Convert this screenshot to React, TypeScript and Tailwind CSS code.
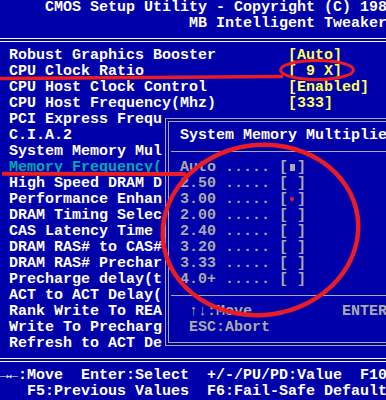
import React from 'react';

type Row = { label: string; value?: string; active?: boolean };

const rows: Row[] = [
  { label: 'Robust Graphics Booster', value: '[Auto]' },
  { label: 'CPU Clock Ratio', value: '[ 9 X]' },
  { label: 'CPU Host Clock Control', value: '[Enabled]' },
  { label: 'CPU Host Frequency(Mhz)', value: '[333]' },
  { label: 'PCI Express Frequ' },
  { label: 'C.I.A.2' },
  { label: 'System Memory Mul' },
  { label: 'Memory Frequency(', active: true },
  { label: 'High Speed DRAM D' },
  { label: 'Performance Enhan' },
  { label: 'DRAM Timing Selec' },
  { label: 'CAS Latency Time' },
  { label: 'DRAM RAS# to CAS#' },
  { label: 'DRAM RAS# Prechar' },
  { label: 'Precharge delay(t' },
  { label: 'ACT to ACT Delay(' },
  { label: 'Rank Write To REA' },
  { label: 'Write To Precharg' },
  { label: 'Refresh to ACT De' },
];

const options = [
  { label: 'Auto', picked: true },
  { label: '2.50' },
  { label: '3.00' },
  { label: '2.00' },
  { label: '2.40' },
  { label: '3.20' },
  { label: '3.33' },
  { label: '4.0+' },
];

function DoubleLine() {
  return (
    <div className="flex h-4 items-center">
      <div className="h-[4px] w-full border-y border-white" />
    </div>
  );
}

function Separator() {
  return (
    <div className="h-4 pl-[2px] pt-[7px]">
      <div className="h-px bg-[#aaaaaa]" />
    </div>
  );
}

function MultiplierPopup() {
  return (
    <div className="absolute left-[162px] top-[112px] h-[240px] w-[240px] bg-[#0000aa] px-[3px] py-[6px]">
      <div className="h-full border border-[#aaaaaa] p-[2px]">
        <div className="h-full border border-[#aaaaaa] pt-[6px]">
          <div className="h-4 pl-[11px] text-white">System Memory Multiplie</div>
          <Separator />
          {options.map((o) => (
            <div key={o.label} className="flex h-4 pl-[11px] text-[#aaaaaa]">
              <span>{o.label} ..... [</span>
              <span className="flex w-[9px] justify-center pt-[4px]">
                {o.picked && <span className="h-[7px] w-[5px] bg-[#aaaaaa]" />}
              </span>
              <span>]</span>
            </div>
          ))}
          <Separator />
          <div className="flex h-4 pl-[20px] text-[#aaaaaa]">
            <span className="w-[153px]">↑↓:Move</span>
            <span>ENTER</span>
          </div>
          <div className="h-4 pl-[20px] text-[#aaaaaa]">ESC:Abort</div>
        </div>
      </div>
    </div>
  );
}

function Annotations() {
  return (
    <svg
      className="pointer-events-none absolute inset-0"
      width="386"
      height="400"
      viewBox="0 0 386 400"
      fill="none"
      stroke="#ec1c24"
    >
      <path d="M0 78.5 L283 76.5" strokeWidth="3.5" />
      <ellipse cx="317" cy="70" rx="36.5" ry="9.5" strokeWidth="3" />
      <path d="M2 173.8 L186 174" strokeWidth="4" />
      <ellipse
        cx="260.5"
        cy="230"
        rx="98"
        ry="85"
        strokeWidth="4.5"
        transform="rotate(-8 260.5 230)"
      />
      <circle cx="292" cy="199" r="2" fill="#ec1c24" stroke="none" />
    </svg>
  );
}

export default function App() {
  return (
    <div className="relative h-[400px] w-[386px] overflow-hidden whitespace-pre bg-[#0000aa] font-['Liberation_Mono',monospace] text-[15px] font-bold leading-4 text-white">
      <div className="h-4 pl-[45px]">CMOS Setup Utility - Copyright (C) 198</div>
      <div className="h-4 pl-[189px]">MB Intelligent Tweaker</div>
      <DoubleLine />

      {rows.map((r) => (
        <div key={r.label} className="flex h-4 pl-[9px]">
          <span className={r.active ? 'w-[279px] text-[#00aaaa]' : 'w-[279px]'}>{r.label}</span>
          {r.value && <span className="text-[#ffff55]">{r.value}</span>}
        </div>
      ))}

      <DoubleLine />
      <div className="h-4">→←:Move  Enter:Select  +/-/PU/PD:Value  F10</div>
      <div className="h-4 pl-[27px]">F5:Previous Values  F6:Fail-Safe Default</div>

      <MultiplierPopup />
      <Annotations />
    </div>
  );
}
